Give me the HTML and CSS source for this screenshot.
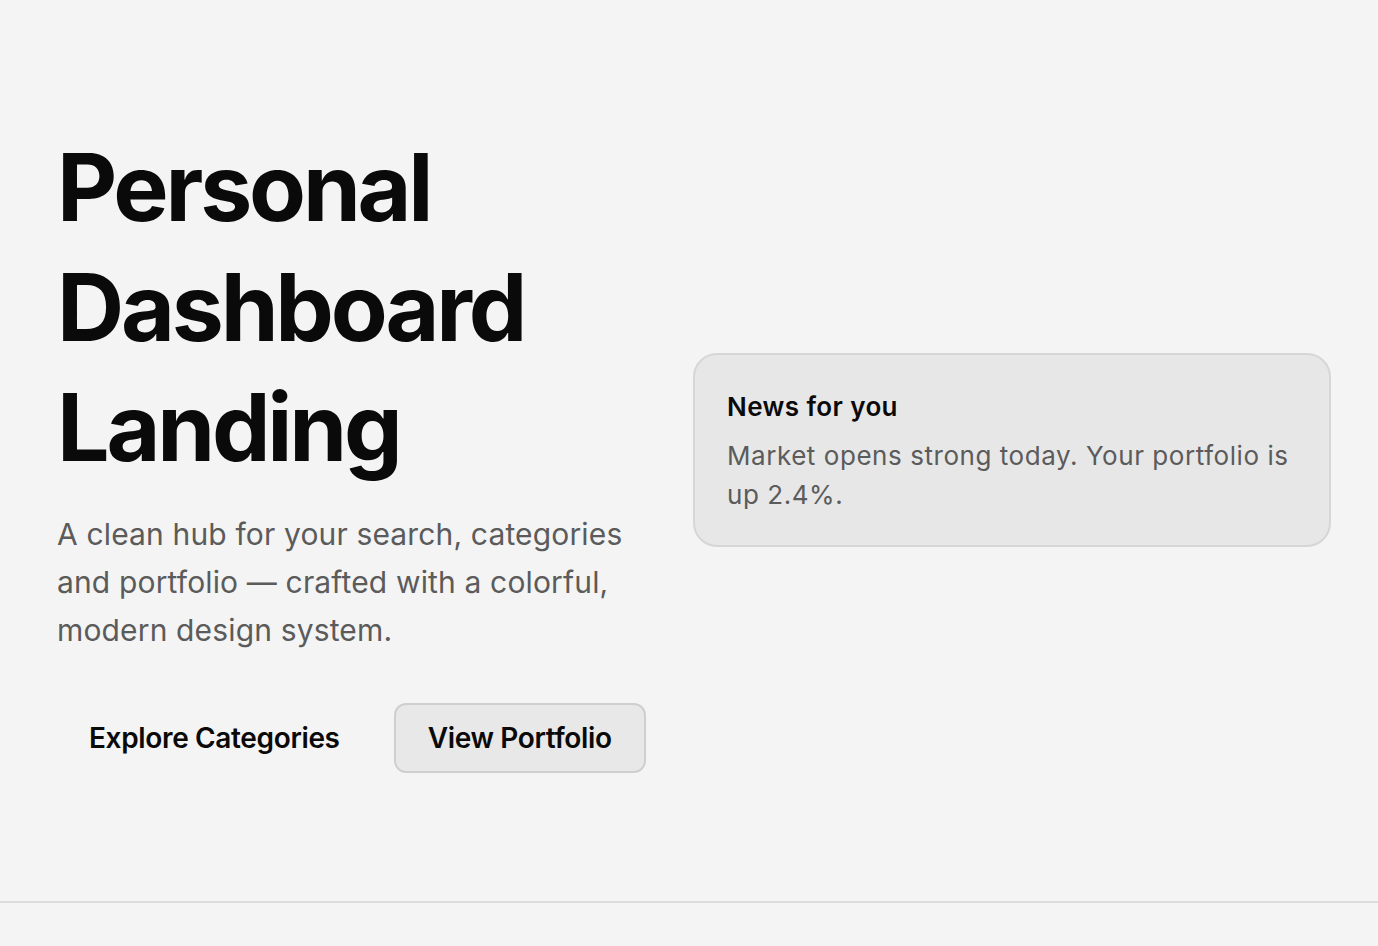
FILE: index.html
```html
<!DOCTYPE html>
<html lang="en">
<head>
<meta charset="utf-8">
<title>Personal Dashboard Landing</title>
<link rel="stylesheet" href="styles.css">
</head>
<body>
<section class="hero">
  <div class="hero-main">
    <h1 class="hero-title">Personal Dashboard Landing</h1>
    <p class="hero-lead">A clean hub for your search, categories and portfolio — crafted with a colorful, modern design system.</p>
    <div class="hero-actions">
      <a class="btn btn-ghost" href="#">Explore Categories</a>
      <a class="btn btn-outline" href="#">View Portfolio</a>
    </div>
  </div>
  <aside class="news-card">
    <h2 class="news-title">News for you</h2>
    <p class="news-text">Market opens strong today. Your portfolio is up 2.4%.</p>
  </aside>
</section>
</body>
</html>
```
FILE: styles.css
```css
html, body {
  margin: 0;
  padding: 0;
  background: #f4f4f4;
  font-family: "Inter", "Liberation Sans", sans-serif;
  color: #0a0a0a;
}

.hero {
  display: grid;
  grid-template-columns: 588px 1fr;
  gap: 48px;
  align-items: center;
  padding: 127px 47px 128px 57px;
  border-bottom: 2px solid #dcdcdc;
}

.hero-title {
  margin: 0 0 23px;
  font-size: 93px;
  line-height: 120px;
  font-weight: 700;
  letter-spacing: -3.2px;
  color: #0a0a0a;
}

.hero-lead {
  margin: 0 0 49px;
  font-size: 30px;
  line-height: 48px;
  letter-spacing: 0.15px;
  color: #5b5b5b;
}

.hero-actions {
  display: flex;
  gap: 22px;
}

.btn {
  display: inline-block;
  padding: 0 32px;
  height: 66px;
  line-height: 66px;
  border: 2px solid transparent;
  border-radius: 12px;
  font-size: 28px;
  font-weight: 600;
  letter-spacing: -0.35px;
  color: #0a0a0a;
  text-decoration: none;
  white-space: nowrap;
}

.btn-ghost {
  border: 0;
  height: 70px;
  line-height: 70px;
}

.btn-outline {
  background: #e8e8e8;
  border-color: #cfcfcf;
}

.news-card {
  background: #e7e7e7;
  border: 2px solid #d6d6d6;
  border-radius: 24px;
  padding: 32px 32px 31px;
}

.news-title {
  margin: 0 0 9px;
  font-size: 26px;
  line-height: 40px;
  font-weight: 600;
  letter-spacing: 0.4px;
  color: #0a0a0a;
}

.news-text {
  margin: 0;
  font-size: 26px;
  line-height: 39px;
  letter-spacing: 0.55px;
  color: #5b5b5b;
}
```
